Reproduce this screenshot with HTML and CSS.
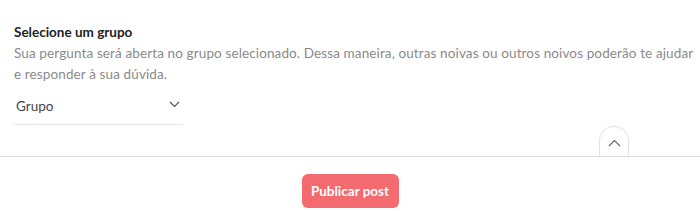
FILE: index.html
```html
<!DOCTYPE html>
<html lang="pt">
<head>
<meta charset="utf-8">
<link rel="stylesheet" href="styles.css">
</head>
<body>
<main class="content">
  <h2 class="title">Selecione um grupo</h2>
  <p class="desc">Sua pergunta será aberta no grupo selecionado. Dessa maneira, outras noivas ou outros noivos poderão te ajudar e responder à sua dúvida.</p>
  <div class="select">
    <span>Grupo</span>
    <svg class="chev" width="11" height="7" viewBox="0 0 11 7"><path d="M1 1l4.5 4.5L10 1" fill="none" stroke="#555" stroke-width="1.2"/></svg>
  </div>
  <div class="tabrow">
    <div class="totop"><svg width="13" height="8" viewBox="0 0 13 8"><path d="M1 7l5.5-5.5L12 7" fill="none" stroke="#666" stroke-width="1.1"/></svg></div>
  </div>
</main>
<footer class="footer">
  <button class="publish">Publicar post</button>
</footer>
</body>
</html>
```
FILE: styles.css
```css
html, body { margin: 0; padding: 0; background: #fff; }
body { font-family: Lato, "Liberation Sans", sans-serif; color: #333; }
.content { padding: 23px 14px 0 14px; }
.title { margin: 0; font-size: 13.5px; font-weight: 700; color: #222; line-height: 18px; }
.desc { margin: 2px -8px 0 0; font-size: 13.5px; letter-spacing: 0.12px; line-height: 21px; color: #8a8a8a; }
.select { width: 169px; box-sizing: border-box; margin-top: 9px; display: flex; align-items: center; justify-content: space-between; padding: 0 3px 0 2px; height: 31px; border-bottom: 1px solid #e3e3e3; font-size: 13.5px; color: #444; }
.select span { padding-bottom: 6px; }
.chev { margin-bottom: 9px; }
.tabrow { display: flex; justify-content: flex-end; padding-right: 57px; margin-top: 1px; }
.totop { width: 30px; height: 30px; box-sizing: border-box; border: 1px solid #e2e2e2; border-bottom: none; border-radius: 15px 15px 0 0; display: flex; align-items: center; justify-content: center; padding-top: 2px; }
.footer { border-top: 1px solid #dedede; display: flex; justify-content: center; padding-top: 17px; }
.publish { font-family: inherit; font-size: 13.5px; font-weight: 700; color: #fff; background: #f36b6f; border: none; border-radius: 6px; width: 97px; height: 34px; padding: 0; }
```
